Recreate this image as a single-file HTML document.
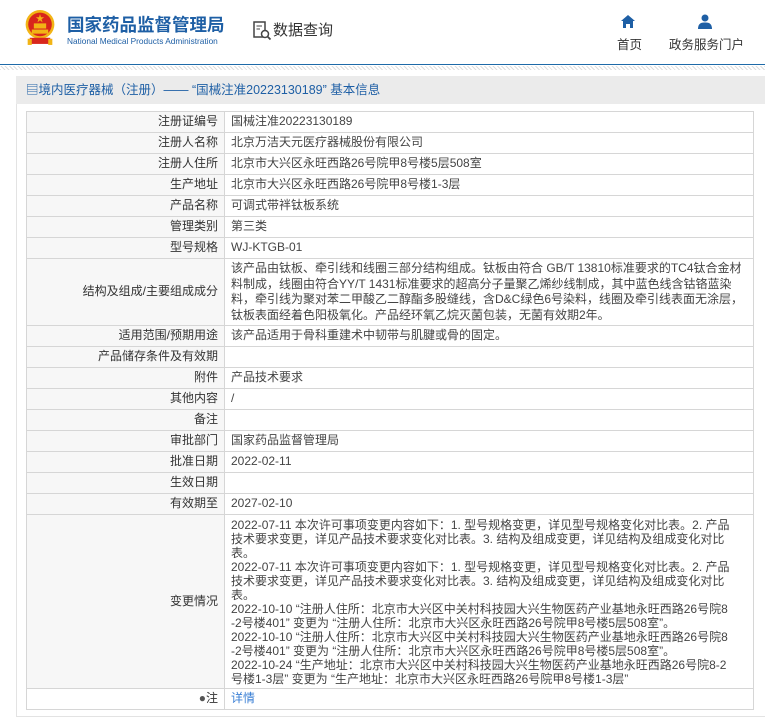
<!DOCTYPE html>
<html><head><meta charset="utf-8"><style>
*{margin:0;padding:0;box-sizing:border-box}
body{width:765px;height:726px;background:#fff;font-family:"Liberation Sans","Noto Sans CJK SC",sans-serif;font-size:12px;color:#333;position:relative;overflow:hidden}
.hdr{position:absolute;left:0;top:0;width:765px;height:65px;border-bottom:1px solid #1e6aa8}
.hatch{position:absolute;top:66px;left:0;width:765px;height:4px;background:repeating-linear-gradient(45deg,#ddd 0 1px,#fff 1px 3px)}
.panel{position:absolute;left:16px;top:76px;width:749px;height:641px;border:1px solid #e3e3e3;border-right:none;border-top:none}
.title{position:absolute;left:16px;top:76px;width:749px;height:28px;background:#ebebeb;color:#1e5fa5;font-size:12.5px;line-height:28px;padding-left:10px;white-space:nowrap}
table{position:absolute;left:26px;top:111px;width:728px;border-collapse:collapse}
td{border:1px solid #d6d6d6;height:21px;line-height:15.5px;padding:2px 6px;vertical-align:middle;font-size:12px;white-space:nowrap}
td.l{width:198px;text-align:right;background:#f7f7f7;color:#333}
td.v{color:#444}
.ln{height:15.5px;line-height:15.5px;overflow:visible}
.ch .ln{height:14px;line-height:14px}
</style></head><body>
<div class="hdr">
<svg style="position:absolute;left:23px;top:9px" width="34" height="38" viewBox="0 0 32 37"><circle cx="16" cy="15" r="14" fill="#f2b415"/><circle cx="16" cy="15" r="11.5" fill="#d8261c"/><rect x="8" y="20" width="16" height="4" fill="#f2b415"/><rect x="10" y="14" width="12" height="5" fill="#f2b415"/><polygon points="16,5 17,8 20,8 17.5,10 18.5,13 16,11 13.5,13 14.5,10 12,8 15,8" fill="#f2b415"/><rect x="6" y="28" width="20" height="6" fill="#d8261c"/><rect x="4" y="29" width="4" height="6" fill="#f2b415"/><rect x="24" y="29" width="4" height="6" fill="#f2b415"/></svg>
<div style="position:absolute;left:67px;top:12px;font-size:17.5px;font-weight:bold;color:#1e5fa5;white-space:nowrap">国家药品监督管理局</div>
<div style="position:absolute;left:67px;top:36px;font-size:8.3px;color:#1e5fa5;white-space:nowrap">National Medical Products Administration</div>
<svg style="position:absolute;left:253px;top:21px" width="19" height="20" viewBox="0 0 19 20"><rect x="1" y="1" width="11" height="15" fill="none" stroke="#444" stroke-width="1.5"/><line x1="3.5" y1="5" x2="9" y2="5" stroke="#444"/><line x1="3.5" y1="8" x2="7" y2="8" stroke="#444"/><circle cx="12" cy="13" r="3.5" fill="#fff" stroke="#444" stroke-width="1.5"/><line x1="14.5" y1="15.5" x2="17.5" y2="18.5" stroke="#444" stroke-width="1.8"/></svg>
<div style="position:absolute;left:273px;top:19px;font-size:15px;color:#333">数据查询</div>
<svg style="position:absolute;left:621px;top:15px" width="14" height="13" viewBox="0 0 14 13"><path d="M7 0 L14 6 L12 6 L12 13 L9 13 L9 9 L5 9 L5 13 L2 13 L2 6 L0 6Z" fill="#1e5fa5"/></svg>
<div style="position:absolute;left:617px;top:34px;font-size:12.5px">首页</div>
<svg style="position:absolute;left:698px;top:14px" width="14" height="15" viewBox="0 0 14 15"><circle cx="7" cy="4" r="3.5" fill="#1e5fa5"/><path d="M0 15 Q0 8 7 8.5 Q14 8 14 15Z" fill="#1e5fa5"/></svg>
<div style="position:absolute;left:669px;top:34px;font-size:12.5px">政务服务门户</div>
</div>
<div class="hatch"></div>
<div class="panel"></div>
<div class="title">▤境内医疗器械（注册）—— “国械注准20223130189” 基本信息</div>
<table>
<tr><td class="l">注册证编号</td><td class="v">国械注准20223130189</td></tr>
<tr><td class="l">注册人名称</td><td class="v">北京万洁天元医疗器械股份有限公司</td></tr>
<tr><td class="l">注册人住所</td><td class="v">北京市大兴区永旺西路26号院甲8号楼5层508室</td></tr>
<tr><td class="l">生产地址</td><td class="v">北京市大兴区永旺西路26号院甲8号楼1-3层</td></tr>
<tr><td class="l">产品名称</td><td class="v">可调式带袢钛板系统</td></tr>
<tr><td class="l">管理类别</td><td class="v">第三类</td></tr>
<tr><td class="l">型号规格</td><td class="v">WJ-KTGB-01</td></tr>
<tr><td class="l">结构及组成/主要组成成分</td><td class="v" style="height:64px"><div class="ln">该产品由钛板、牵引线和线圈三部分结构组成。钛板由符合 GB/T 13810标准要求的TC4钛合金材</div><div class="ln">料制成，线圈由符合YY/T 1431标准要求的超高分子量聚乙烯纱线制成，其中蓝色线含钴铬蓝染</div><div class="ln">料，牵引线为聚对苯二甲酸乙二醇酯多股缝线，含D&amp;C绿色6号染料，线圈及牵引线表面无涂层，</div><div class="ln">钛板表面经着色阳极氧化。产品经环氧乙烷灭菌包装，无菌有效期2年。</div></td></tr>
<tr><td class="l">适用范围/预期用途</td><td class="v">该产品适用于骨科重建术中韧带与肌腱或骨的固定。</td></tr>
<tr><td class="l">产品储存条件及有效期</td><td class="v"></td></tr>
<tr><td class="l">附件</td><td class="v">产品技术要求</td></tr>
<tr><td class="l">其他内容</td><td class="v">/</td></tr>
<tr><td class="l">备注</td><td class="v"></td></tr>
<tr><td class="l">审批部门</td><td class="v">国家药品监督管理局</td></tr>
<tr><td class="l">批准日期</td><td class="v">2022-02-11</td></tr>
<tr><td class="l">生效日期</td><td class="v"></td></tr>
<tr><td class="l">有效期至</td><td class="v">2027-02-10</td></tr>
<tr><td class="l">变更情况</td><td class="v ch" style="height:174px"><div class="ln">2022-07-11 本次许可事项变更内容如下：1. 型号规格变更，详见型号规格变化对比表。2. 产品</div><div class="ln">技术要求变更，详见产品技术要求变化对比表。3. 结构及组成变更，详见结构及组成变化对比</div><div class="ln">表。</div><div class="ln">2022-07-11 本次许可事项变更内容如下：1. 型号规格变更，详见型号规格变化对比表。2. 产品</div><div class="ln">技术要求变更，详见产品技术要求变化对比表。3. 结构及组成变更，详见结构及组成变化对比</div><div class="ln">表。</div><div class="ln">2022-10-10 “注册人住所：北京市大兴区中关村科技园大兴生物医药产业基地永旺西路26号院8</div><div class="ln">-2号楼401” 变更为 “注册人住所：北京市大兴区永旺西路26号院甲8号楼5层508室”。</div><div class="ln">2022-10-10 “注册人住所：北京市大兴区中关村科技园大兴生物医药产业基地永旺西路26号院8</div><div class="ln">-2号楼401” 变更为 “注册人住所：北京市大兴区永旺西路26号院甲8号楼5层508室”。</div><div class="ln">2022-10-24 “生产地址：北京市大兴区中关村科技园大兴生物医药产业基地永旺西路26号院8-2</div><div class="ln">号楼1-3层” 变更为 “生产地址：北京市大兴区永旺西路26号院甲8号楼1-3层”</div></td></tr>
<tr><td class="l" style="background:#fff"><span style="color:#555">●</span>注</td><td class="v" style="color:#3a7fd5">详情</td></tr>
</table>
</body></html>
